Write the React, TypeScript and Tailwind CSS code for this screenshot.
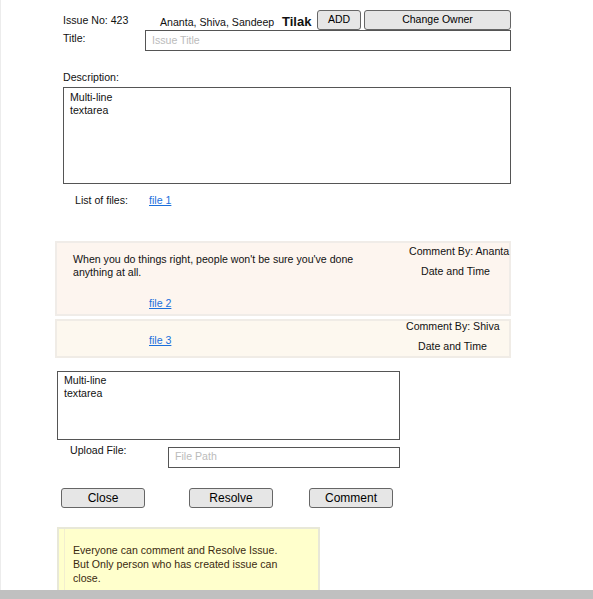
import React from 'react';

const font = { fontFamily: '"Liberation Sans", Arial, sans-serif' };

function Btn({ label, className }: { label: string; className: string }) {
  return (
    <div
      className={`flex items-center justify-center rounded-[3px] border border-[#666] bg-[#e6e6e6] text-black whitespace-nowrap ${className}`}
    >
      {label}
    </div>
  );
}

function FileLink({ label }: { label: string }) {
  return <span className="text-[10.6px] text-[#1a6fdc] underline decoration-[#1a6fdc]">{label}</span>;
}

export default function App() {
  return (
    <div style={font} className="w-[593px] h-[599px] flex flex-col bg-white text-[10.6px] text-[#111] overflow-hidden">
      <div className="flex-1 min-h-0 overflow-hidden shadow-[inset_1px_0_0_#ececec] relative">
        {/* header */}
        <div className="flex items-start pt-[10px] h-[30px]">
          <div className="ml-[63px] w-[97px] pt-[3px]">Issue No: 423</div>
          <div className="pt-[5px] w-[122px] whitespace-nowrap">Ananta, Shiva, Sandeep</div>
          <div className="pt-[2px] text-[13px] font-bold w-[35px]">Tilak</div>
          <Btn label="ADD" className="w-[44px] h-[20px] text-[10.5px]" />
          <Btn label="Change Owner" className="ml-[3px] w-[147px] h-[20px] text-[10.5px]" />
        </div>
        <div className="flex items-start">
          <div className="ml-[63px] w-[82px] pt-[1px]">Title:</div>
          <div className="w-[366px] h-[21px] border border-[#555] flex items-center pl-[6px] text-[#bbb]">Issue Title</div>
        </div>

        <div className="ml-[63px] mt-[19px]">Description:</div>
        <div className="ml-[63px] mt-[1px] w-[448px] h-[97px] border border-[#555] px-[6px] pt-[3px] leading-[13px]">
          Multi-line
          <br />
          textarea
        </div>

        <div className="flex mt-[9px]">
          <div className="ml-[75px] w-[74px]">List of files:</div>
          <FileLink label="file 1" />
        </div>

        {/* comment 1 */}
        <div className="ml-[55px] mt-[32px] w-[456px] h-[75px] border-2 border-[#f0ece8] bg-[#fdf5ef] relative">
          <div className="absolute left-[16px] top-[10px] w-[300px] leading-[13px]">
            When you do things right, people won't be sure you've done anything at all.
          </div>
          <div className="absolute left-[352px] top-[1px] whitespace-nowrap">Comment By: Ananta</div>
          <div className="absolute left-[364px] top-[21px] whitespace-nowrap">Date and Time</div>
          <div className="absolute left-[92px] top-[53px]">
            <FileLink label="file 2" />
          </div>
        </div>

        {/* comment 2 */}
        <div className="ml-[55px] mt-[3px] w-[456px] h-[39px] border-2 border-[#f0ece6] bg-[#fdf8ef] relative">
          <div className="absolute left-[349px] top-[-2px] whitespace-nowrap">Comment By: Shiva</div>
          <div className="absolute left-[361px] top-[18px] whitespace-nowrap">Date and Time</div>
          <div className="absolute left-[92px] top-[12px]">
            <FileLink label="file 3" />
          </div>
        </div>

        <div className="ml-[57px] mt-[13px] w-[343px] h-[69px] border border-[#555] px-[6px] pt-[2px] leading-[13px]">
          Multi-line
          <br />
          textarea
        </div>

        <div className="flex items-start mt-[7px]">
          <div className="ml-[70px] w-[98px] -mt-[4px]">Upload File:</div>
          <div className="w-[232px] h-[21px] border border-[#555] flex items-center pl-[6px] text-[#bbb]">File Path</div>
        </div>

        <div className="flex mt-[20px] text-[12px]">
          <Btn label="Close" className="ml-[61px] w-[84px] h-[20px]" />
          <Btn label="Resolve" className="ml-[44px] w-[84px] h-[20px]" />
          <Btn label="Comment" className="ml-[36px] w-[84px] h-[20px]" />
        </div>

        {/* note */}
        <div className="ml-[57px] mt-[19px] w-[263px] h-[70px] border-2 border-b-0 border-[#e8e8d8] bg-[#ffffcc] flex">
          <div className="w-[6px] border-r border-[#f2eecf]" />
          <div className="pl-[8px] pt-[14px] w-[225px] leading-[14px] text-[#3a2a10]">
            Everyone can comment and Resolve Issue. But Only person who has created issue can close.
          </div>
        </div>
      </div>
      <div className="h-[9px] bg-[#c0c0c0]" />
    </div>
  );
}
